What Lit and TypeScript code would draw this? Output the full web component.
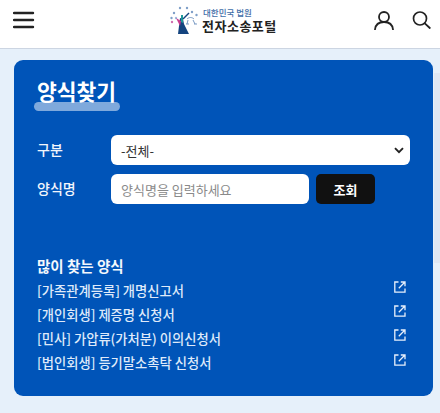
import { LitElement, html, css, svg } from "lit";
import { customElement } from "lit/decorators.js";

const links = [
  "[가족관계등록] 개명신고서",
  "[개인회생] 제증명 신청서",
  "[민사] 가압류(가처분) 이의신청서",
  "[법인회생] 등기말소촉탁 신청서",
];

const dots: [number, number, string][] = [
  [1.5, 13, "#7f9fc8"], [4, 8, "#7f9fc8"], [10, 3, "#7f9fc8"], [17, 3, "#7f9fc8"],
  [22, 7, "#7f9fc8"], [26.5, 10, "#7f9fc8"], [2, 17, "#d070b0"], [6, 13, "#9fbce0"],
];

@customElement("app-root")
export class AppRoot extends LitElement {
  static styles = css`
    :host {
      display: block;
      position: relative;
      width: 440px;
      height: 413px;
      overflow: hidden;
      background: #e6f0fa;
      font-family: "Noto Sans CJK KR", "Noto Sans", sans-serif;
    }
    * { box-sizing: border-box; }
    header {
      height: 49px;
      background: #fff;
      border-bottom: 1px solid #ccd5e2;
      display: flex;
      align-items: center;
      padding: 0 9px 8px 13px;
    }
    .menu { display: block; width: 22px; height: 18px; }
    .logo { display: flex; align-items: center; gap: 4px; margin-left: 135px; }
    .logo svg { display: block; }
    .logo-text { display: flex; flex-direction: column; }
    .logo-sub { font-size: 8.500px; line-height: 11px; color: #3f6ea8; font-weight: 500; padding-left: 1px; }
    .logo-main { font-size: 13px; line-height: 15px; color: #222; font-weight: 700; letter-spacing: .5px; white-space: nowrap; }
    .actions { display: flex; align-items: center; gap: 18px; margin-left: auto; }
    .actions svg { display: block; }
    main { padding: 11px 7px 0 14px; }
    .card {
      height: 336px;
      background: #0054b8;
      border-radius: 9px;
      padding: 15px 23px 0;
      color: #fff;
    }
    .title-wrap { display: inline-flex; flex-direction: column; margin-bottom: 24px; }
    h1 {
      margin: 0;
      font-size: 21.500px;
      line-height: 32px;
      font-weight: 700;
      color: #fff;
      position: relative;
      z-index: 1;
    }
    .pill {
      height: 9px;
      margin: -5px -4px 0 -3px;
      border-radius: 5px;
      background: #7fa9dc;
    }
    .row { display: flex; align-items: center; height: 30px; margin-bottom: 9px; }
    .label { width: 74px; font-size: 14px; font-weight: 500; color: #f2f6fc; position: relative; top: -1px; }
    .select-wrap { width: 299px; height: 30px; position: relative; }
    .select-wrap svg { position: absolute; right: 6px; top: 12px; pointer-events: none; }
    select, input {
      height: 30px;
      border: none;
      border-radius: 6px;
      background-color: #fff;
      font-family: inherit;
      font-size: 13px;
      color: #333;
      outline: none;
    }
    select { width: 100%; padding: 0 24px 0 10px; appearance: none; -webkit-appearance: none; }
    input { width: 198px; padding: 0 10px; }
    input::placeholder { color: #8a8a8a; opacity: 1; }
    button {
      width: 59px;
      height: 30px;
      margin-left: 7px;
      border: none;
      border-radius: 5px;
      background: #111;
      color: #fff;
      font-family: inherit;
      font-size: 13px;
      font-weight: 700;
    }
    h2 { margin: 50px 0 0; font-size: 14.500px; line-height: 24px; font-weight: 700; color: #f4f8fd; }
    ul { list-style: none; margin: 0; padding: 0; }
    li {
      height: 24.200px;
      display: flex;
      align-items: center;
      justify-content: space-between;
      font-size: 13.300px;
      font-weight: 500;
      color: #dfeafa;
      padding-right: 4px;
    }
    li svg { display: block; margin-top: -6px; }
    .track {
      position: absolute;
      right: 0;
      top: 73px;
      width: 6px;
      height: 190px;
      background: #dfe7f3;
    }
  `;

  render() {
    return html`
      <header>
        <svg class="menu" viewBox="0 0 22 18" aria-hidden="true">
          <path d="M1 2h19M1 9h19M1 16h19" stroke="#222" stroke-width="2.400" stroke-linecap="round" fill="none"/>
        </svg>
        <div class="logo">
          <svg width="28" height="30" viewBox="0 0 28 30" aria-hidden="true">
            ${dots.map(([x, y, c]) => svg`<circle cx=${x} cy=${y} r="1.200" fill=${c}></circle>`)}
            <path d="M10 13l3 1 1 5 5 10H8z" fill="#14447f"/>
            <path d="M6 13l5 3-1 5z" fill="#c93b8e"/>
            <path d="M11 10l2 0 0 8-2-1z" fill="#1c9a9a"/>
            <path d="M13 14l6-6" stroke="#14447f" stroke-width="1.400" fill="none"/>
            <path d="M17 14c2-2 5-2 7 0M18 15l-1 4M23 15l2 4M16 19h3M24 19h3" stroke="#6b8fbc" stroke-width=".9" fill="none"/>
          </svg>
          <div class="logo-text">
            <span class="logo-sub">대한민국 법원</span>
            <span class="logo-main">전자소송포털</span>
          </div>
        </div>
        <div class="actions">
          <svg width="20" height="19" viewBox="0 0 20 19" aria-hidden="true">
            <circle cx="10" cy="6" r="5" fill="none" stroke="#222" stroke-width="1.800"/>
            <path d="M1 18.500c.5-4.500 3.800-7.500 9-7.500s8.500 3 9 7.500" fill="none" stroke="#222" stroke-width="1.800" stroke-linecap="round"/>
          </svg>
          <svg width="19" height="18" viewBox="0 0 19 18" aria-hidden="true">
            <circle cx="8" cy="7.500" r="6.500" fill="none" stroke="#222" stroke-width="1.700"/>
            <path d="M12.800 12.300l5 4.700" stroke="#222" stroke-width="1.800" stroke-linecap="round"/>
          </svg>
        </div>
      </header>
      <main>
        <section class="card">
          <div class="title-wrap">
            <h1>양식찾기</h1>
            <div class="pill"></div>
          </div>
          <div class="row">
            <label class="label">구분</label>
            <div class="select-wrap">
              <select><option>-전체-</option></select>
              <svg width="10" height="7" viewBox="0 0 10 7" aria-hidden="true">
                <path d="M1 1.200l4 4 4-4" fill="none" stroke="#222" stroke-width="1.900"/>
              </svg>
            </div>
          </div>
          <div class="row">
            <label class="label">양식명</label>
            <input type="text" placeholder="양식명을 입력하세요" />
            <button>조회</button>
          </div>
          <h2>많이 찾는 양식</h2>
          <ul>
            ${links.map(
              (t) => html`<li>
                <span>${t}</span>
                <svg width="12" height="12" viewBox="0 0 12 12" aria-hidden="true">
                  <path d="M4.500 1H.8v10.200H11V7.500" fill="none" stroke="#e8f0fb" stroke-width="1.300"/>
                  <path d="M4.800 7.200L10.200 1.800M6.800 1h4.200v4.200" fill="none" stroke="#e8f0fb" stroke-width="1.300"/>
                </svg>
              </li>`
            )}
          </ul>
        </section>
      </main>
      <div class="track"></div>
    `;
  }
}
